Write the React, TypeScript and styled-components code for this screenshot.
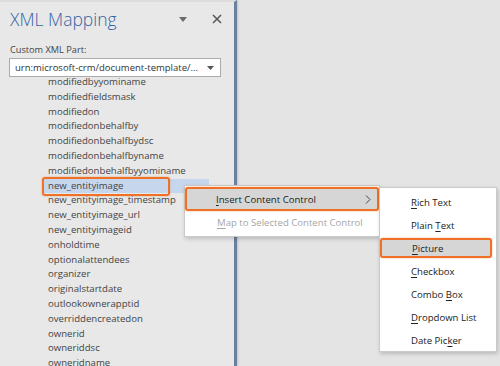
import React from 'react';
import styled, { createGlobalStyle } from 'styled-components';

const GlobalStyle = createGlobalStyle`
  html, body {
    margin: 0;
    padding: 0;
    background: #e4e4e4;
    font-family: 'Open Sans', 'Noto Sans', 'Liberation Sans', sans-serif;
  }
`;

const orange = '#ee7127';

const fields = [
  'modifiedbyyominame',
  'modifiedfieldsmask',
  'modifiedon',
  'modifiedonbehalfby',
  'modifiedonbehalfbydsc',
  'modifiedonbehalfbyname',
  'modifiedonbehalfbyyominame',
  'new_entityimage',
  'new_entityimage_timestamp',
  'new_entityimage_url',
  'new_entityimageid',
  'onholdtime',
  'optionalattendees',
  'organizer',
  'originalstartdate',
  'outlookownerapptid',
  'overriddencreatedon',
  'ownerid',
  'owneriddsc',
  'owneridname',
];

const subItems: { before: string; key: string; after: string }[] = [
  { before: '', key: 'R', after: 'ich Text' },
  { before: 'Plain ', key: 'T', after: 'ext' },
  { before: '', key: 'P', after: 'icture' },
  { before: '', key: 'C', after: 'heckbox' },
  { before: 'Combo ', key: 'B', after: 'ox' },
  { before: '', key: 'D', after: 'ropdown List' },
  { before: 'Date Pic', key: 'k', after: 'er' },
];

const Frame = styled.div`
  position: relative;
  width: 500px;
  height: 366px;
  overflow: hidden;
  display: flex;
  background: #e4e4e4;
`;

const Pane = styled.div`
  width: 237px;
  flex: none;
  background: #e8e8e8;
  border-right: 3px solid #6b7f9f;
  box-shadow: 1px 0 2px rgba(0, 0, 0, 0.15);
  border-top: 2px solid #dcdcdc;
  box-sizing: border-box;
  padding: 0 0 0 9px;
`;

const Header = styled.div`
  display: flex;
  align-items: center;
  height: 34px;
  padding-right: 7px;
`;

const Title = styled.div`
  flex: 1;
  font-size: 17.5px;
  font-weight: 300;
  color: #3264a3;
  padding-left: 1px;
`;

const HeadIcon = styled.span<{ $w: number; $mr?: number }>`
  width: ${(p) => p.$w}px;
  margin-right: ${(p) => p.$mr ?? 0}px;
  display: flex;
  justify-content: center;
`;

const Label = styled.div`
  font-size: 9.2px;
  line-height: 12px;
  color: #444;
  margin-top: 8px;
  padding-left: 1px;
`;

const Select = styled.div`
  margin-top: 2px;
  width: 212px;
  height: 19px;
  box-sizing: border-box;
  background: #fff;
  border: 1px solid #ababab;
  display: flex;
  align-items: center;
  padding: 0 6px 0 5px;
  font-size: 9.5px;
  color: #333;
  white-space: nowrap;
`;

const SelectText = styled.span`
  flex: 1;
  overflow: hidden;
`;

const Caret = styled.svg`
  flex: none;
`;

const List = styled.div`
  padding-left: 35px;
  margin-top: -2px;
`;

const Row = styled.div<{ $selected?: boolean }>`
  position: relative;
  width: 161px;
  height: 14.8px;
  line-height: 14.8px;
  padding-left: 4px;
  font-size: 9.6px;
  color: #444;
  white-space: nowrap;
  background: ${(p) => (p.$selected ? '#c6d6ec' : 'transparent')};

  ${(p) =>
    p.$selected &&
    `
    &::after {
      content: '';
      position: absolute;
      left: -2px;
      top: -2px;
      width: 124px;
      height: 15px;
      border: 2px solid ${orange};
      border-radius: 3px;
      box-shadow: 0 0 2px rgba(238, 113, 39, 0.6);
    }
  `}
`;

const Menu = styled.div`
  position: absolute;
  left: 184px;
  top: 185px;
  width: 194px;
  background: #fff;
  border: 1px solid #cacaca;
  box-shadow: 1px 2px 4px rgba(0, 0, 0, 0.18);
  padding: 1px 0 2px;
`;

const MenuItem = styled.div<{ $active?: boolean; $disabled?: boolean }>`
  position: relative;
  display: flex;
  align-items: center;
  height: 23px;
  margin: 0 1px;
  padding-left: 31px;
  padding-right: 6px;
  font-size: 9.6px;
  color: ${(p) => (p.$disabled ? '#a6a6a6' : '#222')};
  background: ${(p) => (p.$active ? '#d6d6d6' : 'transparent')};
  ${(p) =>
    p.$active &&
    `
    border: 2px solid ${orange};
    border-radius: 3px;
    margin: 0;
    padding-left: 29px;
    height: 20px;
    box-shadow: 0 0 2px rgba(238, 113, 39, 0.6);
  `}
`;

const ItemText = styled.span`
  flex: 1;
  white-space: nowrap;
`;

const Key = styled.span`
  text-decoration: underline;
  text-underline-offset: 2px;
`;

const Sub = styled.div`
  position: absolute;
  left: 379px;
  top: 187px;
  width: 118px;
  height: 165px;
  box-sizing: border-box;
  background: #fff;
  border: 1px solid #cacaca;
  box-shadow: 1px 2px 4px rgba(0, 0, 0, 0.18);
  padding-top: 3px;
`;

const SubItem = styled.div<{ $active?: boolean }>`
  display: flex;
  align-items: center;
  height: 23px;
  box-sizing: border-box;
  padding-left: 31px;
  font-size: 9.6px;
  color: #222;
  white-space: pre;
  background: ${(p) => (p.$active ? '#d6d6d6' : 'transparent')};
  ${(p) =>
    p.$active &&
    `
    margin: 0 4px 0 0;
    height: 20px;
    margin-top: 1px;
    margin-bottom: 2px;
    padding-left: 30px;
    border: 2px solid ${orange};
    border-radius: 3px;
    box-shadow: 0 0 2px rgba(238, 113, 39, 0.6);
  `}
`;

const App = () => {
  return (
    <Frame>
      <GlobalStyle />
      <Pane>
        <Header>
          <Title>XML Mapping</Title>
          <HeadIcon $w={14} $mr={17}>
            <svg width="8" height="5" viewBox="0 0 8 5">
              <path d="M0 0 L8 0 L4 5 Z" fill="#6a6a6a" />
            </svg>
          </HeadIcon>
          <HeadIcon $w={20}>
            <svg width="10" height="10" viewBox="0 0 10 10">
              <path d="M1 1 L9 9 M9 1 L1 9" stroke="#555" strokeWidth="1.5" />
            </svg>
          </HeadIcon>
        </Header>
        <Label>Custom XML Part:</Label>
        <Select>
          <SelectText>urn:microsoft-crm/document-template/...</SelectText>
          <Caret width="7" height="4" viewBox="0 0 7 4">
            <path d="M0 0 L7 0 L3.5 4 Z" fill="#555" />
          </Caret>
        </Select>
        <List>
          {fields.map((f) => (
            <Row key={f} $selected={f === 'new_entityimage'}>
              {f}
            </Row>
          ))}
        </List>
      </Pane>

      <Menu>
        <MenuItem $active>
          <ItemText>
            <Key>I</Key>nsert Content Control
          </ItemText>
          <svg width="6" height="9" viewBox="0 0 6 9">
            <path d="M1 0.5 L5 4.5 L1 8.5" stroke="#444" strokeWidth="1" fill="none" />
          </svg>
        </MenuItem>
        <MenuItem $disabled>
          <ItemText>
            <Key>M</Key>ap to Selected Content Control
          </ItemText>
        </MenuItem>
      </Menu>

      <Sub>
        {subItems.map((s) => (
          <SubItem key={s.before + s.key + s.after} $active={s.key === 'P'}>
            <span>
              {s.before}
              <Key>{s.key}</Key>
              {s.after}
            </span>
          </SubItem>
        ))}
      </Sub>
    </Frame>
  );
};

export default App;
